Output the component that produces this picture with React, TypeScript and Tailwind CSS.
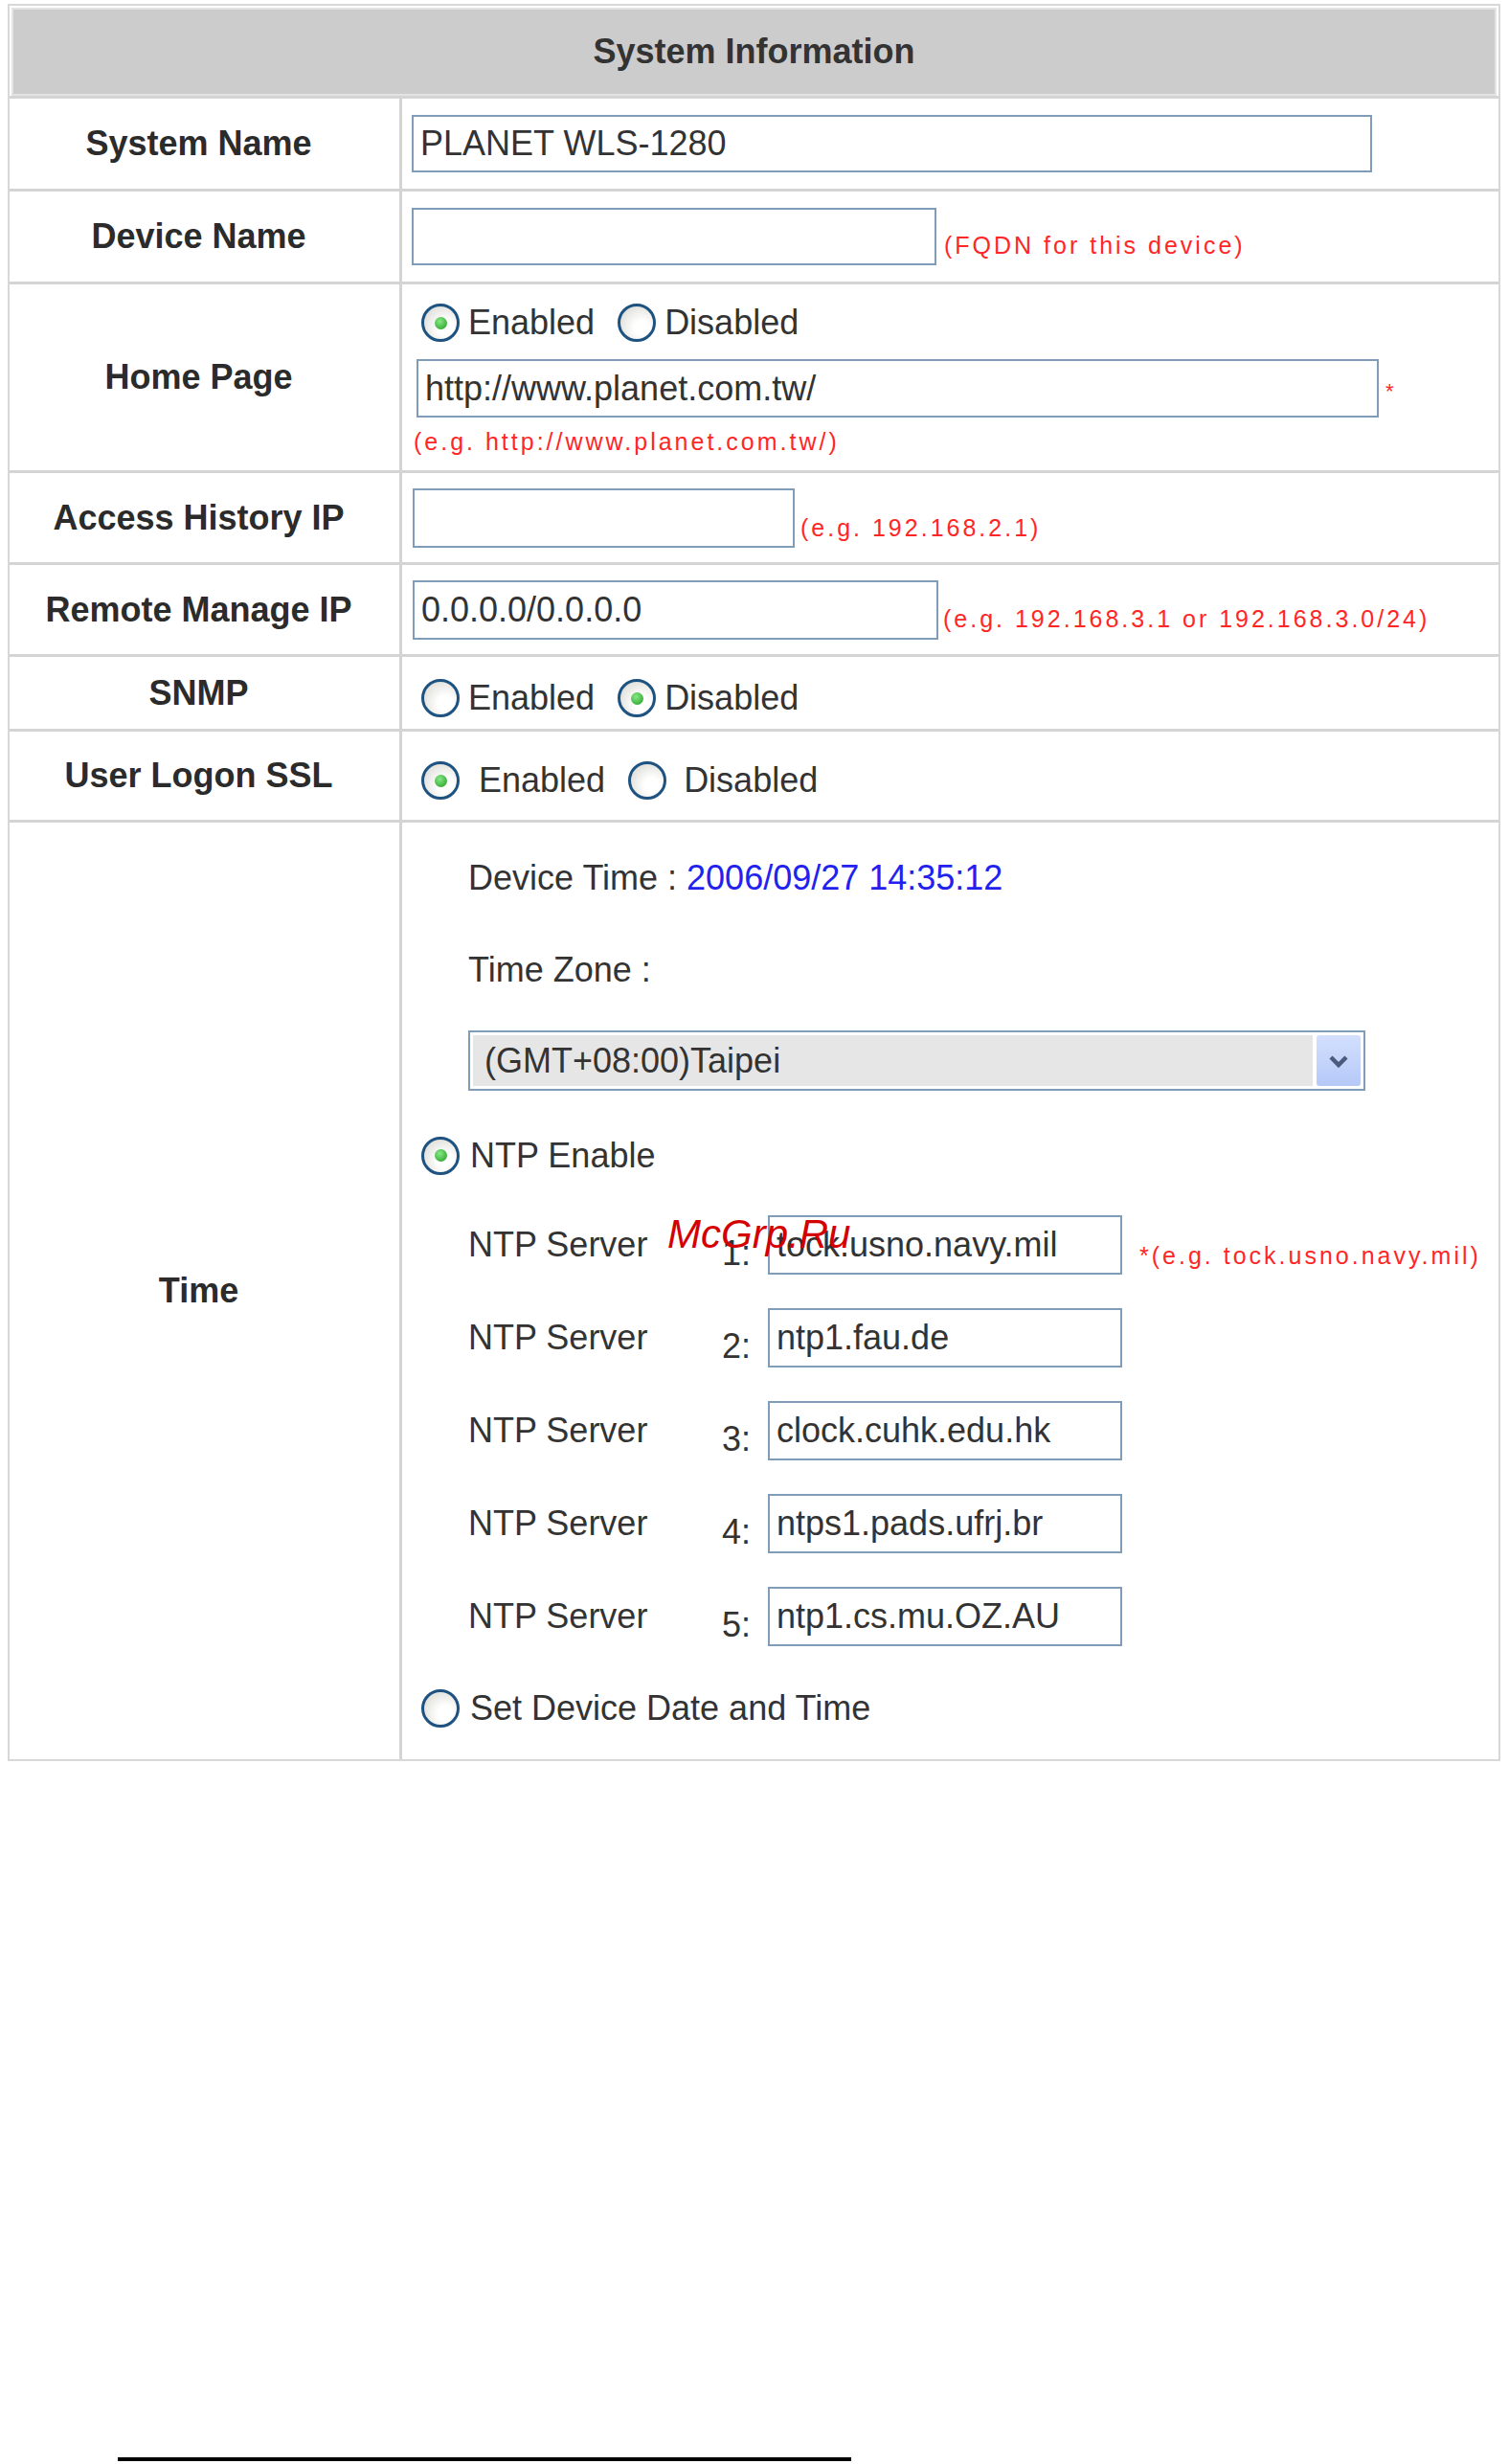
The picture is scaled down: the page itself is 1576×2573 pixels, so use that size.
import type { ReactNode } from "react";

const Radio = ({ checked = false }: { checked?: boolean }) => (
  <span className="flex h-[40px] w-[40px] shrink-0 items-center justify-center rounded-full border-[3px] border-[#1d5281] bg-[radial-gradient(circle_at_65%_65%,#ffffff_25%,#d4d3cc_100%)]">
    {checked && (
      <span className="h-[13px] w-[13px] rounded-full bg-[radial-gradient(circle_at_40%_35%,#86e886,#1d9a1d)]" />
    )}
  </span>
);

const TextBox = ({ value = "", className = "" }: { value?: string; className?: string }) => (
  <input
    readOnly
    value={value}
    className={`shrink-0 border-2 border-[#7f9db9] bg-white pl-[7px] text-[36px] text-[#333333] outline-none ${className}`}
  />
);

const Hint = ({ children, className = "" }: { children: ReactNode; className?: string }) => (
  <span className={`whitespace-nowrap text-[25px] leading-[28px] tracking-[3px] text-[#ff2626] ${className}`}>
    {children}
  </span>
);

const Row = ({
  label,
  className,
  cell,
  children,
}: {
  label: string;
  className: string;
  cell: string;
  children: ReactNode;
}) => (
  <div className={`flex border-t-[3px] border-[#d4d4d4] ${className}`}>
    <div className="flex w-[407px] shrink-0 items-center justify-center pr-[12px] text-[36px] font-bold text-[#2b2b2b]">
      {label}
    </div>
    <div className={`flex-1 border-l-[3px] border-[#d4d4d4] ${cell}`}>{children}</div>
  </div>
);

const ntpServers = [
  "tock.usno.navy.mil",
  "ntp1.fau.de",
  "clock.cuhk.edu.hk",
  "ntps1.pads.ufrj.br",
  "ntp1.cs.mu.OZ.AU",
];

export default function App() {
  return (
    <div className="relative h-[2573px] w-[1576px] overflow-hidden bg-white font-['Liberation_Sans',Arial,sans-serif] text-[#333333]">
      <div className="ml-[8px] mt-[4px] w-[1559px] border-2 border-[#d8d8d8]">
        {/* Header */}
        <div className="m-[2px] mb-0 flex h-[92px] items-center justify-center border-2 border-[#e3e3e3] bg-[#cccccc] text-[36px] font-bold text-[#333333]">
          System Information
        </div>

        <Row label="System Name" className="h-[97px]" cell="flex items-center pl-[10px]">
          <TextBox value="PLANET WLS-1280" className="h-[60px] w-[1003px]" />
        </Row>

        <Row label="Device Name" className="h-[97px]" cell="flex items-center pl-[10px]">
          <TextBox className="h-[60px] w-[548px]" />
          <Hint className="ml-[8px] mt-[18px]">(FQDN for this device)</Hint>
        </Row>

        <Row label="Home Page" className="h-[197px]" cell="flex flex-col pt-[20px]">
          <div className="flex h-[40px] items-center pl-[20px] text-[36px]">
            <Radio checked />
            <span className="ml-[9px]">Enabled</span>
            <span className="ml-[24px]">
              <Radio />
            </span>
            <span className="ml-[9px]">Disabled</span>
          </div>
          <div className="mt-[18px] flex items-center pl-[15px]">
            <TextBox value="http://www.planet.com.tw/" className="h-[61px] w-[1005px]" />
            <span className="ml-[7px] mt-[6px] text-[22px] leading-none text-[#ff2626]">*</span>
          </div>
          <Hint className="ml-[12px] mt-[11px]">(e.g. http://www.planet.com.tw/)</Hint>
        </Row>

        <Row label="Access History IP" className="h-[96px]" cell="flex items-center pl-[11px]">
          <TextBox className="h-[62px] w-[399px]" />
          <Hint className="ml-[6px] mt-[20px]">(e.g. 192.168.2.1)</Hint>
        </Row>

        <Row label="Remote Manage IP" className="h-[96px]" cell="flex items-center pl-[11px]">
          <TextBox value="0.0.0.0/0.0.0.0" className="h-[62px] w-[549px]" />
          <Hint className="ml-[5px] mt-[18px]">(e.g. 192.168.3.1 or 192.168.3.0/24)</Hint>
        </Row>

        <Row label="SNMP" className="h-[78px]" cell="pt-[23px]">
          <div className="flex h-[40px] items-center pl-[20px] text-[36px]">
            <Radio />
            <span className="ml-[9px]">Enabled</span>
            <span className="ml-[24px]">
              <Radio checked />
            </span>
            <span className="ml-[9px]">Disabled</span>
          </div>
        </Row>

        <Row label="User Logon SSL" className="h-[95px]" cell="pt-[31px]">
          <div className="flex h-[40px] items-center pl-[20px] text-[36px]">
            <Radio checked />
            <span className="ml-[20px]">Enabled</span>
            <span className="ml-[24px]">
              <Radio />
            </span>
            <span className="ml-[18px]">Disabled</span>
          </div>
        </Row>

        <Row label="Time" className="h-[981px]" cell="flex flex-col pt-[37px] text-[36px]">
          <div className="pl-[69px] leading-[41px]">
            Device Time : <span className="text-[#2222ee]">2006/09/27 14:35:12</span>
          </div>
          <div className="mt-[55px] pl-[69px] leading-[41px]">Time Zone :</div>

          <div className="ml-[69px] mt-[43px] flex h-[63px] w-[937px] border-2 border-[#7f9db9] bg-white p-[3px]">
            <div className="flex flex-1 items-center bg-[#e6e6e6] pl-[12px] text-[#333333]">(GMT+08:00)Taipei</div>
            <div className="ml-[4px] flex w-[46px] items-center justify-center rounded-[3px] bg-linear-to-b from-[#d3dffd] to-[#b5c9f8]">
              <svg width="24" height="16" viewBox="0 0 24 16">
                <polyline points="4,4 12,12 20,4" fill="none" stroke="#4a5b7d" strokeWidth="4.5" />
              </svg>
            </div>
          </div>

          <div className="mt-[47px] flex h-[41px] items-center pl-[20px]">
            <Radio checked />
            <span className="ml-[11px]">NTP Enable</span>
          </div>

          {ntpServers.map((server, i) => (
            <div key={server} className={`flex items-center pl-[69px] ${i === 0 ? "mt-[42px]" : "mt-[35px]"}`}>
              <span className="w-[265px] shrink-0">NTP Server</span>
              <span className="mt-[16px] w-[48px] shrink-0 leading-[41px]">{i + 1}:</span>
              <TextBox value={server} className="h-[62px] w-[370px]" />
              {i === 0 && <Hint className="ml-[18px] mt-[22px]">*(e.g. tock.usno.navy.mil)</Hint>}
            </div>
          ))}

          <div className="mt-[45px] flex h-[40px] items-center pl-[20px]">
            <Radio />
            <span className="ml-[11px]">Set Device Date and Time</span>
          </div>
        </Row>
      </div>

      <div className="ml-[123px] mt-[727px] h-[4px] w-[766px] bg-black" />

      {/* watermark over the NTP rows */}
      <span className="absolute left-[697px] top-[1268px] text-[42px] italic leading-none text-[#d40000]">
        McGrp.Ru
      </span>
    </div>
  );
}
